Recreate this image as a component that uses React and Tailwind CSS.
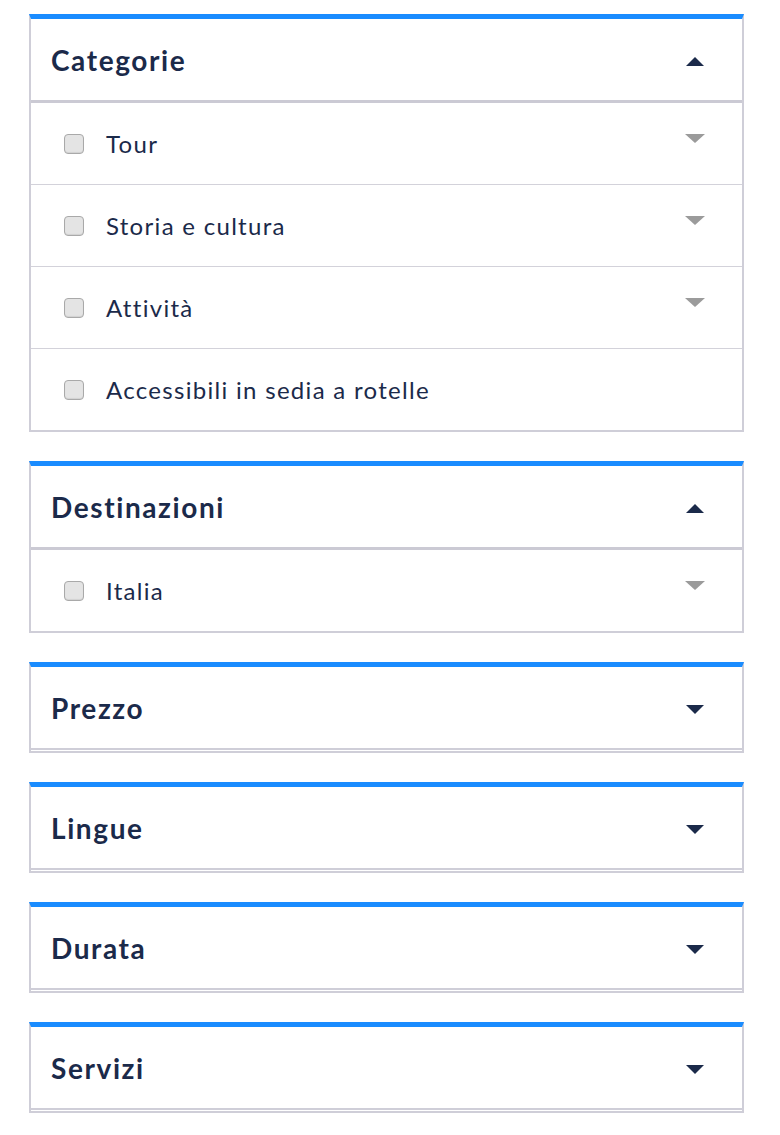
import { useState } from "react";

const NAVY = "text-[#1b2a4a]";

function Caret({ up, muted }) {
  return (
    <svg width="20" height="10" viewBox="0 0 20 10" className={`shrink-0 ${muted ? "mb-[9px]" : "mt-[4px]"}`}>
      {up ? (
        <path d="M10 0 L19 9 L1 9 Z" fill="#1b2a4a" />
      ) : (
        <path d={muted ? "M0 0 L20 0 L10 9 Z" : "M1 0 L19 0 L10 9 Z"} fill={muted ? "#9b9b9b" : "#1b2a4a"} />
      )}
    </svg>
  );
}

function Row({ label, caret, last }) {
  return (
    <div
      className={`flex items-center pl-[33px] pr-[37px] ${
        last ? "h-[81px]" : "h-[82px] border-b border-[#d3d2da]"
      }`}
    >
      <span className="w-[20px] h-[20px] rounded-[4px] border border-[#a9a9a9] bg-[#e4e4e4] shadow-[inset_0_-1px_1px_rgba(0,0,0,0.08)] shrink-0" />
      <span className={`ml-[22px] text-[24px] tracking-[1.3px] ${NAVY} flex-1`}>{label}</span>
      {caret && <Caret muted />}
    </div>
  );
}

function Panel({ title, items, open }) {
  return (
    <div className="border-t-[5px] border-t-[#1a8cff] border-x-2 border-x-[#cfced8] border-b-2 border-b-[#cfced8]">
      <div
        className={`flex items-center pl-[20px] pr-[37px] ${
          open ? "h-[84px] border-b-[3px] border-[#cbcad4]" : "h-[83px] border-b-2 border-[#cfced8] mb-px"
        }`}
      >
        <span className={`flex-1 text-[28px] font-bold ${NAVY} tracking-[1.6px]`}>{title}</span>
        <Caret up={open} />
      </div>
      {open &&
        items.map((it, i) => (
          <Row key={it.label} label={it.label} caret={it.caret} last={i === items.length - 1} />
        ))}
    </div>
  );
}

export default function App() {
  const [panels] = useState([
    {
      title: "Categorie",
      open: true,
      items: [
        { label: "Tour", caret: true },
        { label: "Storia e cultura", caret: true },
        { label: "Attività", caret: true },
        { label: "Accessibili in sedia a rotelle", caret: false },
      ],
    },
    { title: "Destinazioni", open: true, items: [{ label: "Italia", caret: true }] },
    { title: "Prezzo", open: false, items: [] },
    { title: "Lingue", open: false, items: [] },
    { title: "Durata", open: false, items: [] },
    { title: "Servizi", open: false, items: [] },
  ]);

  return (
    <div
      className="min-h-[1135px] bg-white pt-[14px] pl-[29px] pr-[36px] flex flex-col gap-[29px]"
      style={{ fontFamily: "Lato, 'Noto Sans', sans-serif" }}
    >
      {panels.map((p) => (
        <Panel key={p.title} {...p} />
      ))}
    </div>
  );
}
